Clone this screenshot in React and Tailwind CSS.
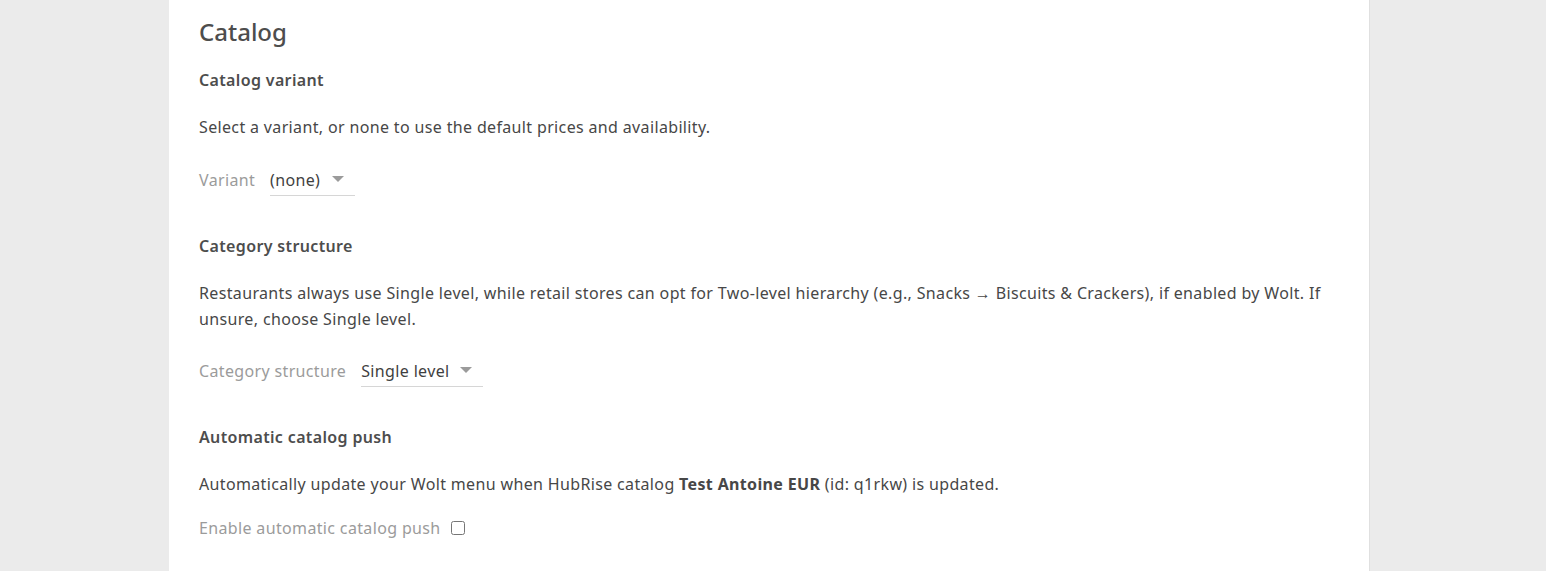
import React, { useState } from "react";

function Caret() {
  return (
    <svg width="12" height="7" viewBox="0 0 12 7" className="ml-auto">
      <path d="M0 0 L12 0 L6 6 Z" fill="#9b9b9b" />
    </svg>
  );
}

function SelectField({ label, value, width }) {
  return (
    <div className="flex items-center gap-[15px]">
      <span className="text-[#9b9b9b]">{label}</span>
      <div className={`flex h-[32px] items-center border-b border-[#d6d6d6] pr-[11px] ${width}`}>
        <span className="text-[#3f3f3f]">{value}</span>
        <Caret />
      </div>
    </div>
  );
}

export default function App() {
  const [autoPush, setAutoPush] = useState(false);

  return (
    <div
      className="flex min-h-[571px] bg-[#ebebeb] text-[16px] tracking-[0.35px] text-[#474747]"
      style={{ fontFamily: '"Noto Sans", "Open Sans", sans-serif' }}
    >
      <section className="ml-[169px] w-[1201px] border-r border-[#e0e0e0] bg-white px-[30px] pt-[14px] pb-[20px]">
        <h1 className="text-[24px] font-medium leading-[36px] tracking-normal text-[#4d4d4d]">Catalog</h1>

        <h2 className="mt-[18px] text-[16px] font-semibold leading-[24px] text-[#4d4d4d]">Catalog variant</h2>
        <p className="mt-[22px] leading-[26px]">Select a variant, or none to use the default prices and availability.</p>
        <div className="mt-[24px]">
          <SelectField label="Variant" value="(none)" width="w-[85px]" />
        </div>

        <h2 className="mt-[38px] text-[16px] font-semibold leading-[24px] text-[#4d4d4d]">Category structure</h2>
        <p className="mt-[22px] leading-[26px]">
          Restaurants always use Single level, while retail stores can opt for Two-level hierarchy (e.g., Snacks → Biscuits &amp; Crackers), if enabled by Wolt. If unsure, choose Single level.
        </p>
        <div className="mt-[23px]">
          <SelectField label="Category structure" value="Single level" width="w-[122px]" />
        </div>

        <h2 className="mt-[38px] text-[16px] font-semibold leading-[24px] text-[#4d4d4d]">Automatic catalog push</h2>
        <p className="mt-[22px] leading-[26px]">
          Automatically update your Wolt menu when HubRise catalog <b className="font-bold">Test Antoine EUR</b> (id: q1rkw) is updated.
        </p>
        <label className="mt-[19px] flex items-center gap-[10px]">
          <span className="text-[#9b9b9b]">Enable automatic catalog push</span>
          <input
            type="checkbox"
            checked={autoPush}
            onChange={(e) => setAutoPush(e.target.checked)}
            className="h-[14px] w-[14px]"
          />
        </label>
      </section>
    </div>
  );
}
